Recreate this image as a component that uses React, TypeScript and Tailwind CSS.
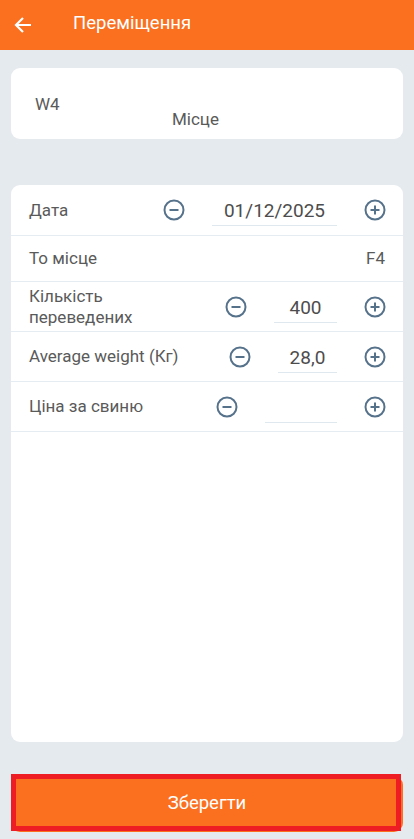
import React from 'react';

const font = { fontFamily: 'Roboto, "Noto Sans", sans-serif' };

function CircleIcon({ plus }: { plus?: boolean }) {
  return (
    <svg width="22" height="22" viewBox="0 0 22 22" className="shrink-0">
      <circle cx="11" cy="11" r="9.5" fill="none" stroke="#56728b" strokeWidth="2" />
      <line x1="6.5" y1="11" x2="15.5" y2="11" stroke="#56728b" strokeWidth="2" />
      {plus && <line x1="11" y1="6.5" x2="11" y2="15.5" stroke="#56728b" strokeWidth="2" />}
    </svg>
  );
}

interface StepRowProps {
  label: React.ReactNode;
  value: string;
  inputClass: string;
  rowClass: string;
}

function StepRow({ label, value, inputClass, rowClass }: StepRowProps) {
  return (
    <div className={`flex items-center border-b border-[#e6edf2] pl-[18px] pr-[17px] ${rowClass}`}>
      <div className="flex-1 text-[17px] leading-[21px] text-[#5a5a5a]">{label}</div>
      <CircleIcon />
      <div
        className={`mx-[27px] mt-[2px] h-[30px] border-b border-[#dfe8ef] text-center text-[19px] leading-[30px] text-[#4d4d4d] ${inputClass}`}
      >
        {value}
      </div>
      <CircleIcon plus />
    </div>
  );
}

export default function App() {
  return (
    <div className="flex h-[839px] w-[414px] flex-col bg-[#e5eaee]" style={font}>
      {/* Header */}
      <div className="flex h-[50px] shrink-0 items-center bg-[#fb701f] pl-[13px]">
        <svg width="20" height="20" viewBox="0 0 20 20">
          <path d="M18 10H3M10 3L3 10l7 7" fill="none" stroke="#fff" strokeWidth="2.2" />
        </svg>
        <span className="ml-[40px] -mt-[2px] text-[18.5px] text-white">Переміщення</span>
      </div>

      <div className="flex flex-1 flex-col px-[11px]">
        {/* Location card */}
        <div className="mt-[18px] h-[71px] rounded-[9px] bg-white pl-[24px]">
          <div className="pt-[26px] text-[17px] leading-[20px] text-[#5a5a5a]">W4</div>
          <div className="-mt-[5px] pl-[137px] text-[17px] leading-[20px] text-[#5a5a5a]">Місце</div>
        </div>

        {/* Form card */}
        <div className="mt-[46px] h-[557px] rounded-[9px] bg-white">
          <StepRow label="Дата" value="01/12/2025" inputClass="w-[125px]" rowClass="h-[51px]" />
          <div className="flex h-[46px] items-center justify-between border-b border-[#e6edf2] pl-[18px] pr-[18px] text-[17px] text-[#5a5a5a]">
            <span>То місце</span>
            <span>F4</span>
          </div>
          <StepRow
            label={
              <>
                Кількість
                <br />
                переведених
              </>
            }
            value="400"
            inputClass="w-[63px]"
            rowClass="h-[50px]"
          />
          <StepRow label="Average weight (Кг)" value="28,0" inputClass="w-[59px]" rowClass="h-[50px]" />
          <StepRow label="Ціна за свиню" value="" inputClass="w-[72px]" rowClass="h-[50px]" />
        </div>

        {/* Save button */}
        <div className="relative mt-[34px] mb-[7px]">
          <button className="flex h-[56px] w-full items-center justify-center rounded-[9px] bg-[#fb701f] text-[18.5px] text-white">
            Зберегти
          </button>
          <div className="pointer-events-none absolute -top-[2px] left-0 right-[2px] h-[57px] border-[5px] border-[#ee1d24]" />
        </div>
      </div>
    </div>
  );
}
